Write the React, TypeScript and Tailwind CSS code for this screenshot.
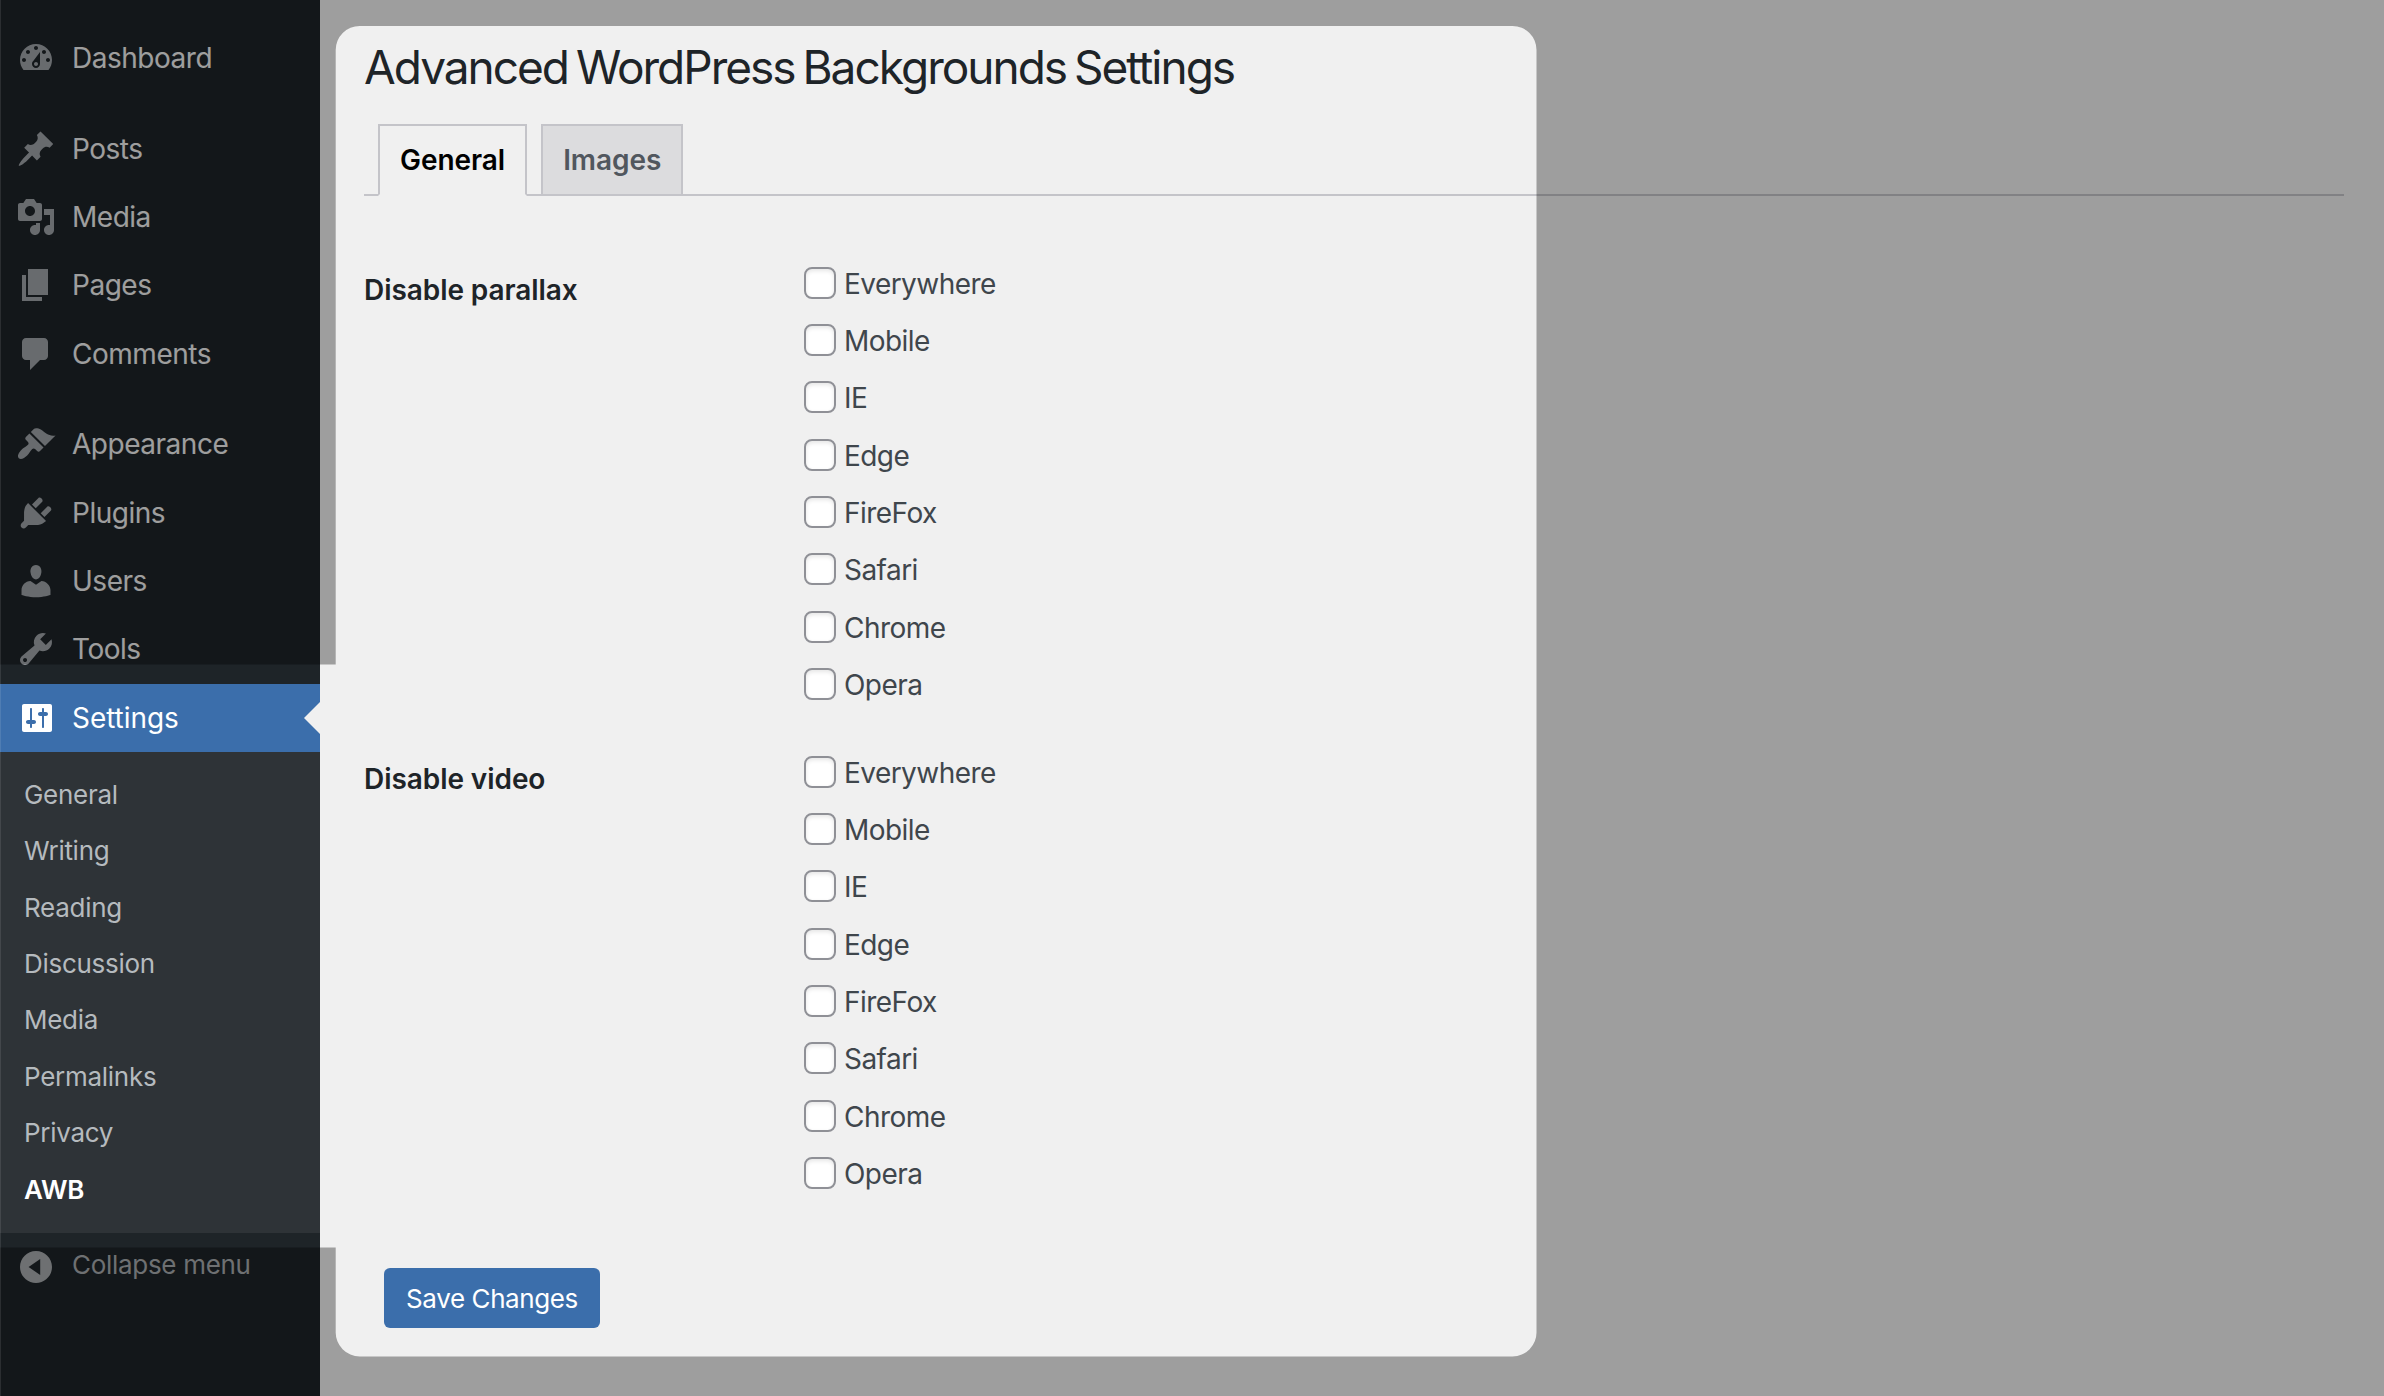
import { useState } from "react";

type MenuItem = {
  label: string;
  icon: string;
  separator?: boolean;
};

const menu: MenuItem[] = [
  {
    label: "Dashboard",
    icon: "M3.76 16h12.48c1.1-1.37 1.76-3.11 1.76-5 0-4.42-3.58-8-8-8s-8 3.58-8 8c0 1.89.66 3.63 1.76 5zM10 4c.55 0 1 .45 1 1s-.45 1-1 1-1-.45-1-1 .45-1 1-1zM6 6c.55 0 1 .45 1 1s-.45 1-1 1-1-.45-1-1 .45-1 1-1zm8 0c.55 0 1 .45 1 1s-.45 1-1 1-1-.45-1-1 .45-1 1-1zm-5.37 5.55L12 7v6c0 1.1-.9 2-2 2s-2-.9-2-2c0-.57.24-1.08.63-1.45zM4 10c.55 0 1 .45 1 1s-.45 1-1 1-1-.45-1-1 .45-1 1-1zm12 0c.55 0 1 .45 1 1s-.45 1-1 1-1-.45-1-1 .45-1 1-1zm-5 3c0-.55-.45-1-1-1s-1 .45-1 1 .45 1 1 1 1-.45 1-1z",
  },
  {
    label: "Posts",
    separator: true,
    icon: "M10.44 3.02l1.82-1.82 6.36 6.35-1.83 1.82c-1.05-.68-2.48-.57-3.41.36l-.75.75c-.92.93-1.04 2.35-.35 3.41l-1.83 1.82-2.41-2.41-2.8 2.79c-.42.42-3.38 2.71-3.8 2.29s1.86-3.39 2.28-3.81l2.79-2.79L4.1 9.36l1.83-1.82c1.05.69 2.48.57 3.4-.36l.75-.75c.93-.92 1.05-2.35.36-3.41z",
  },
  {
    label: "Media",
    icon: "M13 11V4c0-.55-.45-1-1-1h-1.67L9 1H5L3.67 3H2c-.55 0-1 .45-1 1v7c0 .55.45 1 1 1h10c.55 0 1-.45 1-1zM7 4.5c1.38 0 2.5 1.12 2.5 2.5S8.38 9.5 7 9.5 4.5 8.38 4.5 7 5.62 4.5 7 4.5zM14 6h5v10.5c0 1.38-1.12 2.5-2.5 2.5S14 17.88 14 16.5s1.12-2.5 2.5-2.5c.17 0 .34.02.5.05V9h-3V6zm-4 8.05V13h2v3.5c0 1.38-1.12 2.5-2.5 2.5S7 17.88 7 16.5 8.12 14 9.5 14c.17 0 .34.02.5.05z",
  },
  {
    label: "Pages",
    icon: "M6 15V2h10v13H6zm-1 1h8v2H3V5h2v11z",
  },
  {
    label: "Comments",
    icon: "M5 2h9c1.1 0 2 .9 2 2v7c0 1.1-.9 2-2 2h-2l-5 5v-5H5c-1.1 0-2-.9-2-2V4c0-1.1.9-2 2-2z",
  },
  {
    label: "Appearance",
    separator: true,
    icon: "M14.48 11.06L7.41 3.99l1.5-1.5c.5-.56 2.3-.47 3.51.32 1.21.8 1.43 1.28 2.91 2.1 1.18.64 2.45 1.26 4.45.85zm-.71.71L6.7 4.7 4.93 6.47c-.39.39-.39 1.02 0 1.41l1.06 1.06c.39.39.39 1.03 0 1.42-.6.6-1.43 1.11-2.21 1.69-.35.26-.7.53-1.01.84C1.43 14.23.4 16.08 1.4 17.07c.99 1 2.84-.03 4.18-1.36.31-.31.58-.66.85-1.02.57-.78 1.08-1.61 1.69-2.21.39-.39 1.02-.39 1.41 0l1.06 1.06c.39.39 1.02.39 1.41 0z",
  },
  {
    label: "Plugins",
    icon: "M13.11 4.36L9.87 7.6 8 5.73l3.24-3.24c.35-.34 1.05-.2 1.56.32.52.51.66 1.21.31 1.55zm-8 1.77l.91-1.12 9.01 9.01-1.19.84c-.71.71-2.63 1.16-3.82 1.16H6.14L4.9 17.26c-.59.59-1.54.59-2.12 0-.59-.58-.59-1.53 0-2.12l1.24-1.24v-3.88c0-1.13.4-3.19 1.09-3.89zm7.26 3.97l3.24-3.24c.34-.35 1.04-.21 1.55.31.52.51.66 1.21.31 1.55l-3.24 3.25z",
  },
  {
    label: "Users",
    icon: "M10 9.25c-2.27 0-2.73-3.44-2.73-3.44C7 4.02 7.82 2 9.97 2c2.16 0 2.98 2.02 2.71 3.81 0 0-.41 3.44-2.68 3.44zm0 2.57L12.72 10c2.39 0 4.52 2.33 4.52 4.53v2.49s-3.65 1.13-7.24 1.13c-3.65 0-7.24-1.13-7.24-1.13v-2.49c0-2.25 1.94-4.48 4.47-4.48z",
  },
  {
    label: "Tools",
    icon: "M16.68 9.77c-1.34 1.34-3.3 1.67-4.95.99l-5.41 6.52c-.99.99-2.59.99-3.58 0s-.99-2.59 0-3.57l6.52-5.42c-.68-1.65-.35-3.61.99-4.95 1.28-1.28 3.12-1.62 4.72-1.06l-2.89 2.89 2.82 2.82 2.86-2.87c.53 1.58.18 3.39-1.08 4.65zM3.81 16.21c.4.39 1.04.39 1.43 0 .4-.4.4-1.04 0-1.43-.39-.4-1.03-.4-1.43 0-.39.39-.39 1.03 0 1.43z",
  },
  {
    label: "Settings",
    icon: "M18 16V4c0-.55-.45-1-1-1H4c-.55 0-1 .45-1 1v12c0 .55.45 1 1 1h13c.55 0 1-.45 1-1zM8 11h1c.55 0 1 .45 1 1s-.45 1-1 1H8v1.5c0 .28-.22.5-.5.5s-.5-.22-.5-.5V13H6c-.55 0-1-.45-1-1s.45-1 1-1h1V5.5c0-.28.22-.5.5-.5s.5.22.5.5V11zm5-2h-1c-.55 0-1-.45-1-1s.45-1 1-1h1V5.5c0-.28.22-.5.5-.5s.5.22.5.5V7h1c.55 0 1 .45 1 1s-.45 1-1 1h-1v5.5c0 .28-.22.5-.5.5s-.5-.22-.5-.5V9z",
  },
];

const collapseIcon = "M10 2c4.42 0 8 3.58 8 8s-3.58 8-8 8-8-3.58-8-8 3.58-8 8-8zM12.1 14V6L6.3 10z";

const submenu = ["General", "Writing", "Reading", "Discussion", "Media", "Permalinks", "Privacy", "AWB"];

const tabs = ["General", "Images"];

const sections = ["Disable parallax", "Disable video"];

const options = ["Everywhere", "Mobile", "IE", "Edge", "FireFox", "Safari", "Chrome", "Opera"];

const Icon = ({ d }: { d: string }) => (
  <svg viewBox="0 0 20 20" className="ml-4 size-10 shrink-0" fill="currentColor" fillRule="evenodd">
    <path d={d} />
  </svg>
);

const Sidebar = () => (
  <nav className="flex w-80 shrink-0 flex-col bg-[#1e2428] pt-6">
    {menu.map(({ label, icon, separator }) => {
      const current = label === "Settings";

      return (
        <a
          key={label}
          className={`relative flex h-[68.4px] shrink-0 items-center gap-4 text-[28px] ${separator ? "mt-[22px]" : ""} ${current ? "bg-[#3b6eab] text-white" : "text-[#9ea3a8]"}`}
        >
          <Icon d={icon} />
          <span className={current ? "tracking-[-0.05px] text-white" : "tracking-[-0.48px] text-[#f0f0f0]"}>{label}</span>
          {current && (
            <span className="absolute right-0 top-[18px] border-y-[16px] border-r-[16px] border-y-transparent border-r-[#f0f0f0]" />
          )}
        </a>
      );
    })}

    <div className="flex flex-col bg-[#2e3337] pb-[15.4px] pt-3.5">
      {submenu.map((label) => (
        <a
          key={label}
          className={`flex h-[56.45px] items-center pl-6 text-[26px] tracking-[-0.28px] ${label === "AWB" ? "font-semibold text-white" : "text-[#b5babe]"}`}
        >
          {label}
        </a>
      ))}
    </div>

    <button className="flex h-[68px] items-center gap-4 text-[26px] tracking-[-0.3px] text-[#a7aaad]">
      <Icon d={collapseIcon} />
      <span className="-mt-1">Collapse menu</span>
    </button>
  </nav>
);

const Checkbox = ({ label }: { label: string }) => {
  const [checked, setChecked] = useState(false);

  return (
    <label className="flex h-[57.3px] items-start gap-2 text-[28px] leading-[35.4px] tracking-[-0.55px] text-[#3f464c]">
      <input
        type="checkbox"
        checked={checked}
        onChange={(event) => setChecked(event.target.checked)}
        className="size-8 appearance-none rounded-lg border-2 border-[#8f9096] bg-white shadow-[inset_0_2px_4px_rgba(0,0,0,0.1)] checked:bg-[#3b6eab]"
      />
      {label}
    </label>
  );
};

const App = () => {
  const [tab, setTab] = useState("General");

  return (
    <div className="relative flex h-[1396px] w-[2384px] overflow-hidden bg-[#f0f0f0] font-['Inter',sans-serif] text-[#1e2428]">
      <Sidebar />

      <main className="flex grow flex-col pl-11 pr-10">
        <h1 className="mt-[39px] text-[46px] leading-[56px] tracking-[-2px] [word-spacing:-3px]">
          Advanced WordPress Backgrounds Settings
        </h1>

        <div className="mt-[29px] flex h-[72px] border-b-2 border-[#c4c4c9] pl-3.5">
          {tabs.map((name) => (
            <button
              key={name}
              onClick={() => setTab(name)}
              className={`mr-3.5 border-2 border-[#c4c4c9] px-5 text-[28px] font-semibold leading-[48px] tracking-[-0.05px] ${name === tab ? "h-[72px] border-b-[#f0f0f0] bg-[#f0f0f0] text-black" : "h-[70px] border-b-0 bg-[#dcdcde] text-[#51575e]"}`}
            >
              {name}
            </button>
          ))}
        </div>

        <form className="mt-[70.8px] flex flex-col items-start" onSubmit={(event) => event.preventDefault()}>
          {sections.map((title) => (
            <fieldset key={title} className="mb-[30.6px] flex">
              <div className="w-[440px] pt-1.5 text-[28px] font-semibold leading-[34px] tracking-[-0.07px]">{title}</div>
              <div>
                {options.map((label) => (
                  <Checkbox key={label} label={label} />
                ))}
              </div>
            </fieldset>
          ))}

          <button type="submit" className="ml-5 mt-[23px] h-[60px] w-[216px] rounded-md bg-[#3b6eab] pt-0.5 text-[26px] tracking-[-0.4px] text-white">
            Save Changes
          </button>
        </form>
      </main>

      {/* Dimmed layer, left open over the settings menu and the form */}
      <div className="pointer-events-none absolute inset-0 bg-black/34 [clip-path:path(evenodd,'M0_0H2384V1396H0ZM0_664.6H335.7V50A24_24_0_0_1_359.7_26H1512.5A24_24_0_0_1_1536.5_50V1332A24_24_0_0_1_1512.5_1356.4H359.7A24_24_0_0_1_335.7_1332V1247.6H0Z')]" />
      <div className="pointer-events-none absolute inset-y-0 left-0 w-px bg-white/10" />
    </div>
  );
};

export default App;
